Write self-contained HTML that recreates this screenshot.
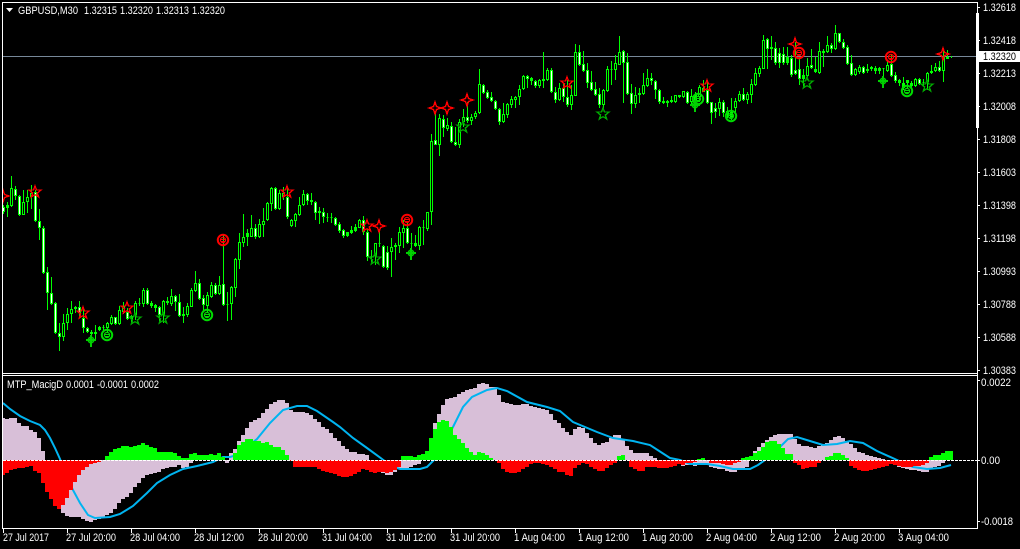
<!DOCTYPE html>
<html>
<head>
<meta charset="utf-8">
<title>GBPUSD,M30</title>
<style>
html,body{margin:0;padding:0;background:#000;width:1020px;height:549px;overflow:hidden}
svg{display:block;position:absolute;left:0;top:0}
text{font-family:"Liberation Sans",sans-serif;font-size:11px;fill:#fff}
</style>
</head>
<body>
<svg width="1020" height="549" viewBox="0 0 1020 549" xmlns="http://www.w3.org/2000/svg">
<defs>
<polygon id="s5" points="0,-6 1.5,-2 6,-2 2.4,1 3.7,5 0,2.6 -3.7,5 -2.4,1 -6,-2 -1.5,-2" fill="none" stroke-width="1.4"/>
<polygon id="s4" points="0,-6 1.5,-1.5 6,0 1.5,1.5 0,6 -1.5,1.5 -6,0 -1.5,-1.5" fill="none" stroke="#f00" stroke-width="1.3"/>
<g id="br" fill="none" stroke="#f00"><circle r="5.2" stroke-width="2"/><circle r="2.6" stroke-width="1.2"/><path d="M-2 -.5H2M-2 1.5H2" stroke-width="1"/></g>
<g id="bg" fill="none" stroke="#00dc00"><circle r="5.2" stroke-width="2"/><circle r="2.6" stroke-width="1.2"/><path d="M-2 -.5H2M-2 1.5H2" stroke-width="1"/></g>
<g id="pl" fill="none" stroke="#00d000"><circle r="2.7" stroke-width="1.6"/><path d="M-5 0H5M0 -5V7" stroke-width="2"/></g>
</defs>

<rect width="1020" height="549" fill="#000"/>

<!-- current price line -->
<path d="M3 56.5H977" stroke="#778899" stroke-width="1" shape-rendering="crispEdges"/>

<!-- wicks -->
<g transform="translate(.5,0)" shape-rendering="crispEdges">
<path fill="none" stroke="#00ff00" stroke-width="1" d="M3 205V214M7 202V217M11 176V207M15 186V200M19 195V216M23 190V215M27 190V213M31 185V209M35 190V222M39 209V240M43 226V274M47 267V310M51 277V305M55 302V334M59 323V351M63 314V341M67 308V330M71 301V323M75 306V313M79 301V318M83 308V333M87 327V333M91 330V340M95 325V340M99 326V331M103 325V331M107 322V333M111 315V325M115 317V325M119 306V325M123 302V314M127 308V320M131 315V322M135 301V320M139 298V306M143 288V307M147 288V305M151 301V308M155 304V312M159 306V322M163 300V323M167 297V305M171 289V306M175 295V311M179 294V317M183 307V323M187 303V317M191 288V307M195 271V292M199 279V300M203 295V312M207 292V312M211 282V298M215 283V295M219 276V295M223 235V306M227 292V321M231 286V320M235 258V297M239 233V269M243 214V247M247 229V246M251 215V237M255 224V239M259 219V238M263 208V237M267 202V221M271 187V211M275 187V210M279 190V210M283 187V200M287 187V219M291 219V227M295 213V227M299 197V216M303 190V206M307 193V205M311 193V205M315 201V220M319 207V224M323 208V223M327 213V222M331 213V223M335 217V226M339 222V233M343 229V238M347 232V237M351 226V234M355 224V232M359 219V228M363 216V235M367 229V261M371 250V263M375 243V265M379 231V247M383 245V268M387 246V270M391 238V277M395 243V260M399 227V253M403 220V248M407 223V244M411 233V253M415 235V247M419 226V250M423 220V245M427 212V231M431 134V225M435 112V145M439 114V156M443 115V137M447 118V131M451 122V143M455 127V146M459 119V148M463 109V127M467 102V123M471 114V125M475 111V119M479 69V114M483 84V94M487 90V99M491 92V102M495 100V110M499 108V125M503 103V123M507 103V118M511 96V108M515 96V108M519 85V105M523 75V90M527 75V88M531 77V85M535 80V88M539 79V88M543 52V88M547 68V81M551 68V93M555 87V103M559 83V101M563 83V102M567 80V107M571 85V110M575 44V96M579 45V66M583 51V72M587 63V88M591 71V91M595 82V96M599 88V108M603 89V108M607 66V92M611 61V85M615 55V80M619 36V65M623 50V103M627 53V95M631 84V114M635 87V108M639 88V103M643 73V95M647 69V87M651 73V85M655 80V99M659 89V104M663 97V104M667 100V107M671 96V103M675 95V103M679 95V98M683 91V98M687 91V104M691 89V105M695 92V107M699 85V102M703 80V92M707 82V104M711 102V124M715 103V118M719 98V116M723 100V117M727 107V118M731 98V120M735 98V112M739 91V102M743 88V101M747 92V104M751 79V103M755 68V86M759 66V77M763 35V69M767 38V69M771 36V60M775 42V65M779 48V68M783 47V65M787 47V65M791 55V77M795 42V75M799 57V85M803 69V88M807 58V80M811 49V69M815 57V73M819 42V74M823 49V67M827 36V53M831 43V53M835 25V50M839 33V43M843 39V49M847 45V65M851 55V76M855 68V76M859 65V74M863 66V74M867 64V73M871 66V71M875 66V74M879 67V74M883 68V87M887 60V72M891 55V77M895 72V83M899 79V86M903 77V90M907 80V88M911 81V88M915 78V87M919 78V85M923 79V86M927 72V90M931 65V74M935 63V72M939 61V72M943 50V82M947 50V59M951 56V58"/>
</g>

<!-- candle bodies -->
<g transform="translate(-.5,.5)" shape-rendering="crispEdges" stroke="#00ff00" stroke-width="1">
<path fill="#ffffff" d="M3 207h2v4h-2zM15 189h2v6h-2zM19 196h2v18h-2zM35 192h2v28h-2zM39 221h2v6h-2zM43 228h2v44h-2zM47 272h2v20h-2zM51 293h2v10h-2zM55 303h2v29h-2zM59 333h2v3h-2zM79 307h2v5h-2zM83 318h2v9h-2zM87 328h2v3h-2zM115 317h2v6h-2zM127 312h2v6h-2zM147 290h2v13h-2zM159 307h2v7h-2zM175 296h2v5h-2zM179 302h2v13h-2zM199 283h2v15h-2zM203 298h2v6h-2zM215 285h2v8h-2zM223 284h2v20h-2zM255 228h2v8h-2zM275 188h2v20h-2zM287 197h2v19h-2zM307 194h2v6h-2zM315 202h2v10h-2zM323 212h2v4h-2zM335 218h2v6h-2zM339 224h2v6h-2zM343 230h2v5h-2zM363 220h2v11h-2zM367 232h2v24h-2zM383 246h2v20h-2zM387 252h2v15h-2zM407 228h2v14h-2zM435 140h2v4h-2zM443 119h2v8h-2zM451 126h2v15h-2zM455 142h2v2h-2zM467 117h2v3h-2zM483 85h2v7h-2zM487 92h2v5h-2zM491 97h2v3h-2zM495 101h2v7h-2zM499 109h2v12h-2zM527 76h2v2h-2zM535 81h2v4h-2zM551 70h2v21h-2zM555 92h2v7h-2zM563 88h2v8h-2zM567 97h2v7h-2zM579 52h2v12h-2zM583 64h2v6h-2zM587 70h2v12h-2zM591 82h2v7h-2zM595 89h2v5h-2zM599 94h2v10h-2zM623 51h2v11h-2zM627 62h2v31h-2zM631 93h2v10h-2zM651 78h2v2h-2zM655 81h2v8h-2zM659 90h2v11h-2zM687 92h2v10h-2zM707 90h2v12h-2zM711 102h2v10h-2zM715 108h2v3h-2zM723 102h2v10h-2zM743 94h2v5h-2zM767 39h2v9h-2zM775 48h2v14h-2zM779 53h2v9h-2zM783 54h2v8h-2zM791 58h2v16h-2zM795 70h2v3h-2zM799 69h2v9h-2zM811 65h2v2h-2zM831 45h2v3h-2zM839 33h2v8h-2zM843 42h2v5h-2zM847 47h2v16h-2zM851 63h2v11h-2zM863 67h2v5h-2zM891 64h2v11h-2zM895 75h2v5h-2zM919 79h2v4h-2zM939 67h2v3h-2z"/>
<path fill="#000000" d="M11 188h2v17h-2zM23 202h2v12h-2zM27 197h2v4h-2zM31 193h2v3h-2zM63 323h2v13h-2zM67 314h2v8h-2zM71 309h2v4h-2zM107 323h2v4h-2zM111 317h2v6h-2zM119 310h2v13h-2zM123 306h2v5h-2zM135 303h2v11h-2zM143 290h2v13h-2zM163 301h2v13h-2zM171 296h2v7h-2zM187 306h2v8h-2zM191 290h2v16h-2zM195 283h2v7h-2zM207 295h2v10h-2zM211 285h2v11h-2zM219 285h2v8h-2zM231 287h2v16h-2zM235 259h2v28h-2zM239 242h2v17h-2zM243 237h2v5h-2zM251 228h2v8h-2zM259 224h2v12h-2zM263 221h2v3h-2zM267 203h2v16h-2zM271 188h2v15h-2zM279 193h2v15h-2zM283 193h2v3h-2zM291 220h2v5h-2zM295 214h2v6h-2zM299 205h2v9h-2zM303 194h2v10h-2zM359 220h2v7h-2zM375 243h2v12h-2zM391 247h2v4h-2zM399 232h2v13h-2zM403 228h2v4h-2zM419 227h2v18h-2zM427 212h2v16h-2zM431 141h2v70h-2zM439 118h2v26h-2zM447 125h2v3h-2zM459 122h2v22h-2zM463 117h2v4h-2zM471 117h2v3h-2zM475 113h2v3h-2zM479 84h2v28h-2zM503 114h2v7h-2zM507 104h2v10h-2zM511 99h2v5h-2zM515 97h2v2h-2zM519 89h2v7h-2zM523 76h2v12h-2zM539 80h2v5h-2zM547 70h2v9h-2zM559 88h2v11h-2zM571 95h2v9h-2zM575 52h2v43h-2zM603 90h2v14h-2zM607 69h2v21h-2zM615 63h2v6h-2zM619 52h2v12h-2zM635 95h2v8h-2zM643 85h2v8h-2zM647 78h2v7h-2zM675 95h2v6h-2zM683 91h2v5h-2zM691 96h2v5h-2zM699 87h2v9h-2zM719 102h2v6h-2zM735 101h2v6h-2zM739 94h2v6h-2zM747 94h2v5h-2zM751 84h2v10h-2zM755 73h2v11h-2zM759 68h2v5h-2zM763 40h2v28h-2zM807 66h2v9h-2zM819 51h2v21h-2zM827 45h2v6h-2zM835 33h2v15h-2zM855 69h2v5h-2zM859 67h2v4h-2zM887 65h2v5h-2zM915 79h2v6h-2zM927 73h2v8h-2zM935 67h2v3h-2zM943 57h2v13h-2z"/>
<path fill="#00ff00" d="M7 205h2v2h-2zM75 307h2v1h-2zM91 332h2v1h-2zM95 332h2v1h-2zM99 327h2v2h-2zM103 327h2v0h-2zM131 316h2v2h-2zM139 303h2v0h-2zM151 303h2v2h-2zM155 305h2v2h-2zM167 301h2v1h-2zM183 314h2v1h-2zM227 304h2v0h-2zM247 233h2v3h-2zM311 200h2v1h-2zM319 211h2v1h-2zM327 217h2v0h-2zM331 217h2v0h-2zM347 232h2v3h-2zM351 230h2v2h-2zM355 227h2v3h-2zM371 256h2v0h-2zM379 243h2v0h-2zM395 245h2v1h-2zM411 243h2v0h-2zM415 243h2v2h-2zM423 227h2v0h-2zM531 78h2v2h-2zM543 79h2v1h-2zM611 69h2v0h-2zM639 93h2v1h-2zM663 101h2v1h-2zM667 101h2v1h-2zM671 100h2v1h-2zM679 95h2v1h-2zM695 95h2v4h-2zM703 88h2v3h-2zM727 111h2v3h-2zM731 112h2v4h-2zM771 47h2v1h-2zM787 57h2v5h-2zM803 75h2v3h-2zM815 69h2v2h-2zM823 51h2v1h-2zM867 69h2v1h-2zM871 67h2v1h-2zM875 68h2v2h-2zM879 68h2v2h-2zM883 68h2v0h-2zM899 80h2v2h-2zM903 83h2v4h-2zM907 80h2v2h-2zM911 83h2v2h-2zM923 82h2v0h-2zM931 71h2v1h-2zM947 57h2v1h-2z"/>
</g>

<!-- markers -->
<g shape-rendering="crispEdges">
<g stroke="#f00">
<use href="#s5" x="35" y="192"/><use href="#s5" x="83" y="313"/><use href="#s5" x="127" y="308"/><use href="#s5" x="287" y="192"/><use href="#s5" x="367" y="226"/><use href="#s5" x="567" y="83"/><use href="#s5" x="707" y="86"/>
</g>
<g stroke="#00a800">
<use href="#s5" x="135" y="319"/><use href="#s5" x="163" y="318"/><use href="#s5" x="375" y="259"/><use href="#s5" x="463" y="127"/><use href="#s5" x="603" y="114"/><use href="#s5" x="807" y="83"/><use href="#s5" x="927" y="86"/>
</g>
<use href="#s4" x="379" y="226"/><use href="#s4" x="435" y="108"/><use href="#s4" x="447" y="108"/><use href="#s4" x="467" y="100"/><use href="#s4" x="795" y="44"/><use href="#s4" x="943" y="54"/><use href="#s4" x="3" y="196"/>
</g>
<use href="#br" x="223" y="240"/><use href="#br" x="407" y="220"/><use href="#br" x="799" y="53"/><use href="#br" x="891" y="57"/>
<use href="#bg" x="107" y="335"/><use href="#bg" x="207" y="315"/><use href="#bg" x="698" y="99"/><use href="#bg" x="731" y="116"/><use href="#bg" x="907" y="91"/>
<use href="#pl" x="91" y="340"/><use href="#pl" x="411" y="253"/><use href="#pl" x="695" y="105"/><use href="#pl" x="883" y="81"/>

<!-- indicator: thistle histogram -->
<g fill="none" stroke-width="4" shape-rendering="crispEdges">
<path stroke="#D8BFD8" d="M3 460V418M7 460V419M11 460V418M15 460V418M19 460V423M23 460V426M27 460V426M31 460V430M35 460V432M39 460V438M43 460V451M63 460V513M67 460V516M71 460V517M75 460V517M79 460V517M83 460V519M87 460V521M91 460V522M95 460V520M99 460V519M103 460V517M107 460V515M111 460V513M115 460V509M119 460V503M123 460V499M127 460V497M131 460V493M135 460V487M139 460V483M143 460V478M147 460V475M151 460V474M155 460V473M159 460V472M163 460V469M167 460V468M171 460V467M175 460V467M179 460V465M183 460V468M187 460V467M191 460V463M227 460V463M231 460V453M235 460V449M239 460V441M243 460V435M247 460V428M251 460V422M255 460V420M259 460V418M263 460V413M267 460V409M271 460V404M275 460V402M279 460V400M283 460V400M287 460V403M291 460V410M295 460V412M299 460V412M303 460V412M307 460V413M311 460V415M315 460V419M319 460V422M323 460V427M327 460V429M331 460V433M335 460V438M339 460V441M343 460V446M347 460V449M351 460V452M355 460V452M359 460V454M363 460V454M367 460V455M383 460V473M387 460V475M391 460V475M395 460V472M399 460V468M403 460V468M407 460V468M411 460V467M415 460V465M419 460V464M435 460V423M439 460V414M443 460V405M447 460V399M451 460V398M455 460V397M459 460V394M463 460V392M467 460V390M471 460V389M475 460V388M479 460V384M483 460V383M487 460V384M491 460V387M495 460V387M499 460V395M503 460V402M507 460V403M511 460V404M515 460V405M519 460V405M523 460V404M527 460V404M531 460V406M535 460V407M539 460V408M543 460V409M547 460V410M551 460V414M555 460V420M559 460V423M563 460V428M567 460V432M571 460V435M575 460V429M579 460V427M583 460V428M587 460V433M591 460V438M595 460V443M599 460V445M603 460V443M607 460V442M611 460V438M615 460V435M619 460V435M623 460V440M627 460V446M631 460V450M635 460V453M639 460V453M643 460V453M647 460V453M651 460V456M655 460V458M683 460V466M687 460V465M691 460V465M695 460V466M699 460V465M703 460V464M707 460V464M711 460V467M715 460V468M719 460V469M723 460V469M727 460V471M731 460V472M735 460V472M739 460V470M743 460V468M747 460V467M751 460V456M755 460V451M759 460V447M763 460V443M767 460V440M771 460V437M775 460V435M779 460V434M783 460V434M787 460V434M791 460V434M795 460V439M799 460V444M803 460V446M807 460V446M811 460V447M815 460V448M819 460V446M823 460V444M827 460V443M831 460V440M835 460V437M839 460V436M843 460V438M847 460V441M851 460V444M855 460V448M859 460V452M863 460V453M867 460V455M871 460V456M875 460V457M879 460V458M883 460V459M899 460V467M903 460V468M907 460V469M911 460V470M915 460V470M919 460V471M923 460V472M927 460V472M931 460V469M935 460V467M939 460V466M943 460V463"/>
</g>

<!-- signal line -->
<polyline fill="none" stroke="#00b4f0" stroke-width="2" points="3,403 10,409 20,416 30,421 40,425 45,430 50,438 55,448 60,459 66,475 73,490 80,503 88,515 95,518 110,517 120,514 133,506 147,493 157,483 170,475 183,469 197,466 213,462 223,457 230,457 237,455 257,439 270,423 283,410 297,406 307,406 317,411 333,422 340,427 353,438 367,448 382,459 393,467 400,469 420,469 427,467 435,459 453,427 463,407 472,397 487,390 497,388 507,391 527,402 547,407 560,411 573,422 597,432 613,438 633,441 650,445 670,458 680,460 690,464 707,464 720,466 733,469 750,469 758,465 765,460 780,447 788,439 797,437 810,441 823,445 837,444 850,441 863,443 877,451 897,460 913,467 927,469 940,468 951,465"/>

<!-- red / green histogram -->
<g fill="none" stroke-width="4" shape-rendering="crispEdges">
<path stroke="#ff0000" d="M3 460V475M7 460V473M11 460V470M15 460V469M19 460V468M23 460V468M27 460V467M31 460V466M35 460V471M39 460V473M43 460V483M47 460V492M51 460V499M55 460V506M59 460V509M63 460V505M67 460V498M71 460V490M75 460V482M79 460V475M83 460V470M87 460V467M91 460V464M95 460V463M99 460V462M291 460V461M295 460V467M299 460V467M303 460V467M307 460V467M311 460V467M315 460V467M319 460V469M323 460V471M327 460V472M331 460V473M335 460V474M339 460V476M343 460V477M347 460V477M351 460V476M355 460V474M359 460V472M363 460V469M367 460V470M371 460V472M375 460V473M379 460V472M383 460V472M387 460V473M391 460V472M395 460V470M399 460V467M499 460V463M503 460V469M507 460V472M511 460V473M515 460V473M519 460V472M523 460V469M527 460V467M531 460V464M535 460V463M539 460V463M543 460V464M547 460V465M551 460V467M555 460V469M559 460V472M563 460V472M567 460V475M571 460V476M575 460V468M579 460V465M583 460V463M587 460V464M591 460V467M595 460V469M599 460V471M603 460V471M607 460V468M611 460V465M615 460V463M631 460V467M635 460V469M639 460V471M643 460V471M647 460V467M651 460V467M655 460V467M659 460V468M663 460V468M667 460V468M671 460V467M675 460V466M679 460V464M683 460V465M687 460V463M691 460V463M695 460V462M711 460V463M715 460V463M719 460V463M723 460V464M727 460V465M731 460V465M735 460V463M739 460V462M795 460V463M799 460V465M803 460V469M807 460V468M811 460V467M815 460V467M819 460V463M851 460V466M855 460V468M859 460V470M863 460V471M867 460V471M871 460V470M875 460V469M879 460V468M883 460V467M887 460V466M891 460V464M895 460V465M899 460V466M903 460V467M907 460V467M911 460V467M915 460V466M919 460V466M923 460V465M927 460V463"/>
<path stroke="#00ff00" d="M107 460V456M111 460V452M115 460V449M119 460V448M123 460V446M127 460V446M131 460V447M135 460V446M139 460V445M143 460V443M147 460V445M151 460V447M155 460V448M159 460V452M163 460V452M167 460V452M171 460V452M175 460V453M179 460V456M183 460V458M187 460V458M191 460V454M195 460V453M199 460V455M203 460V455M207 460V455M211 460V454M215 460V455M219 460V453M223 460V457M235 460V453M239 460V445M243 460V442M247 460V439M251 460V439M255 460V441M259 460V441M263 460V443M267 460V442M271 460V445M275 460V447M279 460V447M283 460V450M287 460V455M403 460V456M407 460V456M411 460V456M415 460V457M419 460V455M423 460V454M427 460V451M431 460V438M435 460V429M439 460V422M443 460V420M447 460V421M451 460V427M455 460V435M459 460V439M463 460V443M467 460V448M471 460V452M475 460V455M479 460V452M483 460V453M487 460V455M491 460V458M619 460V456M623 460V455M699 460V459M703 460V458M743 460V458M747 460V457M751 460V456M755 460V453M759 460V451M763 460V447M767 460V442M771 460V441M775 460V441M779 460V444M783 460V448M787 460V454M791 460V454M827 460V457M831 460V456M835 460V453M839 460V453M843 460V455M847 460V458M931 460V457M935 460V455M939 460V455M943 460V453M947 460V451M951 460V451"/>
</g>

<!-- zero dashed line -->
<path d="M3 460.5H977" stroke="#fff" stroke-width="1" stroke-dasharray="3 1" shape-rendering="crispEdges"/>

<!-- frame -->
<rect x="0" y="0" width="2" height="549" fill="#000"/>
<rect x="978" y="0" width="42" height="549" fill="#000"/>
<g fill="#fff" shape-rendering="crispEdges">
<rect x="2" y="2" width="976" height="1"/>
<rect x="2" y="373" width="976" height="1"/>
<rect x="2" y="375" width="976" height="1"/>
<rect x="2" y="528" width="976" height="1"/>
<rect x="2" y="2" width="1" height="527"/>
<rect x="977" y="2" width="1" height="527"/>
<rect x="976" y="13" width="3" height="115"/>
<!-- price ticks -->
<path d="M978 7h2v1h-2zM978 40h2v1h-2zM978 73h2v1h-2zM978 106h2v1h-2zM978 139h2v1h-2zM978 172h2v1h-2zM978 205h2v1h-2zM978 238h2v1h-2zM978 271h2v1h-2zM978 304h2v1h-2zM978 337h2v1h-2zM978 370h2v1h-2zM978 380h2v1h-2zM978 460h2v1h-2zM978 521h2v1h-2z"/>
<!-- time ticks -->
<path d="M3 529h1v4h-1zM67 529h1v4h-1zM131 529h1v4h-1zM195 529h1v4h-1zM259 529h1v4h-1zM323 529h1v4h-1zM387 529h1v4h-1zM451 529h1v4h-1zM515 529h1v4h-1zM579 529h1v4h-1zM643 529h1v4h-1zM707 529h1v4h-1zM771 529h1v4h-1zM835 529h1v4h-1zM899 529h1v4h-1z"/>
<rect x="979" y="51" width="41" height="11"/>
</g>

<!-- header -->
<polygon points="6,8 13,8 9.5,12" fill="#fff"/>
<text x="18" y="14" textLength="60" lengthAdjust="spacingAndGlyphs">GBPUSD,M30</text>
<text x="84" y="14" textLength="33" lengthAdjust="spacingAndGlyphs">1.32315</text>
<text x="120" y="14" textLength="33" lengthAdjust="spacingAndGlyphs">1.32320</text>
<text x="156" y="14" textLength="33" lengthAdjust="spacingAndGlyphs">1.32313</text>
<text x="192" y="14" textLength="33" lengthAdjust="spacingAndGlyphs">1.32320</text>
<text x="7" y="388" textLength="56" lengthAdjust="spacingAndGlyphs">MTP_MacigD</text>
<text x="66" y="388" textLength="28" lengthAdjust="spacingAndGlyphs">0.0001</text>
<text x="97" y="388" textLength="31" lengthAdjust="spacingAndGlyphs">-0.0001</text>
<text x="131" y="388" textLength="28" lengthAdjust="spacingAndGlyphs">0.0002</text>

<!-- price axis -->
<g>
<text x="983" y="11" textLength="33" lengthAdjust="spacingAndGlyphs">1.32618</text>
<text x="983" y="44" textLength="33" lengthAdjust="spacingAndGlyphs">1.32418</text>
<text x="983" y="60" textLength="33" lengthAdjust="spacingAndGlyphs" style="fill:#000">1.32320</text>
<text x="983" y="77" textLength="33" lengthAdjust="spacingAndGlyphs">1.32213</text>
<text x="983" y="110" textLength="33" lengthAdjust="spacingAndGlyphs">1.32008</text>
<text x="983" y="143" textLength="33" lengthAdjust="spacingAndGlyphs">1.31808</text>
<text x="983" y="176" textLength="33" lengthAdjust="spacingAndGlyphs">1.31603</text>
<text x="983" y="209" textLength="33" lengthAdjust="spacingAndGlyphs">1.31398</text>
<text x="983" y="242" textLength="33" lengthAdjust="spacingAndGlyphs">1.31198</text>
<text x="983" y="275" textLength="33" lengthAdjust="spacingAndGlyphs">1.30993</text>
<text x="983" y="308" textLength="33" lengthAdjust="spacingAndGlyphs">1.30788</text>
<text x="983" y="341" textLength="33" lengthAdjust="spacingAndGlyphs">1.30588</text>
<text x="983" y="374" textLength="33" lengthAdjust="spacingAndGlyphs">1.30383</text>
<text x="981" y="386" textLength="30" lengthAdjust="spacingAndGlyphs">0.0022</text>
<text x="981" y="464" textLength="19" lengthAdjust="spacingAndGlyphs">0.00</text>
<text x="981" y="525" textLength="32" lengthAdjust="spacingAndGlyphs">-0.0018</text>
</g>

<!-- time axis -->
<g>
<text x="3" y="541" textLength="46" lengthAdjust="spacingAndGlyphs">27 Jul 2017</text>
<text x="66" y="541" textLength="50" lengthAdjust="spacingAndGlyphs">27 Jul 20:00</text>
<text x="130" y="541" textLength="50" lengthAdjust="spacingAndGlyphs">28 Jul 04:00</text>
<text x="194" y="541" textLength="50" lengthAdjust="spacingAndGlyphs">28 Jul 12:00</text>
<text x="258" y="541" textLength="50" lengthAdjust="spacingAndGlyphs">28 Jul 20:00</text>
<text x="322" y="541" textLength="50" lengthAdjust="spacingAndGlyphs">31 Jul 04:00</text>
<text x="386" y="541" textLength="50" lengthAdjust="spacingAndGlyphs">31 Jul 12:00</text>
<text x="450" y="541" textLength="50" lengthAdjust="spacingAndGlyphs">31 Jul 20:00</text>
<text x="514" y="541" textLength="51" lengthAdjust="spacingAndGlyphs">1 Aug 04:00</text>
<text x="578" y="541" textLength="51" lengthAdjust="spacingAndGlyphs">1 Aug 12:00</text>
<text x="642" y="541" textLength="51" lengthAdjust="spacingAndGlyphs">1 Aug 20:00</text>
<text x="706" y="541" textLength="51" lengthAdjust="spacingAndGlyphs">2 Aug 04:00</text>
<text x="770" y="541" textLength="51" lengthAdjust="spacingAndGlyphs">2 Aug 12:00</text>
<text x="834" y="541" textLength="51" lengthAdjust="spacingAndGlyphs">2 Aug 20:00</text>
<text x="898" y="541" textLength="51" lengthAdjust="spacingAndGlyphs">3 Aug 04:00</text>
</g>
</svg>
</body>
</html>
